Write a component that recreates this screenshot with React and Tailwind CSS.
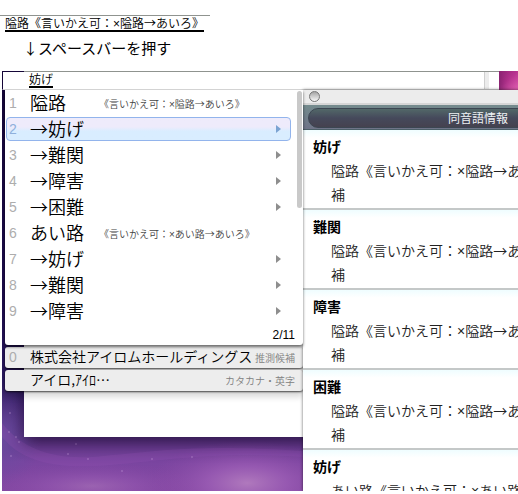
import { useState } from "react";

const NOTE = "《言いかえ可：×隘路→あいろ》";

const CANDIDATES = [
  { text: "隘路", note: NOTE },
  { text: "→妨げ", more: true },
  { text: "→難関", more: true },
  { text: "→障害", more: true },
  { text: "→困難", more: true },
  { text: "あい路", note: "《言いかえ可：×あい路→あいろ》" },
  { text: "→妨げ", more: true },
  { text: "→難関", more: true },
  { text: "→障害", more: true },
];

const HOMONYMS = [
  { word: "妨げ", from: "隘路" },
  { word: "難関", from: "隘路" },
  { word: "障害", from: "隘路" },
  { word: "困難", from: "隘路" },
  { word: "妨げ", from: "あい路" },
];

const STARS = [
  [6, 49], [9, 145], [5, 190], [7, 121], [14, 126], [17, 131], [74, 133],
  [66, 143], [86, 148], [150, 148], [190, 146], [177, 124], [120, 160], [8, 102],
];

// The multiplication sign stays half width, everything else uses the CJK face.
function Note({ children }) {
  const [before, after] = children.split("×");
  return (
    <>
      {before}
      <span className="font-['Liberation_Sans',sans-serif] leading-none">×</span>
      {after}
    </>
  );
}

function Wallpaper() {
  return (
    <svg
      className="absolute inset-0 h-full w-full"
      viewBox="0 0 516 420"
      preserveAspectRatio="none"
      aria-hidden="true"
    >
      <defs>
        <linearGradient id="sky" x1="0" y1="0" x2="0" y2="1">
          <stop offset="0" stopColor="#150638" />
          <stop offset="0.55" stopColor="#1d0c4c" />
          <stop offset="0.74" stopColor="#2c1a60" />
          <stop offset="0.86" stopColor="#55307c" />
          <stop offset="0.93" stopColor="#7a45a0" />
          <stop offset="1" stopColor="#8247a2" />
        </linearGradient>
        <radialGradient id="glow">
          <stop offset="0" stopColor="#b079bd" />
          <stop offset="0.4" stopColor="#9c5db5" stopOpacity="0.8" />
          <stop offset="1" stopColor="#8a48a5" stopOpacity="0" />
        </radialGradient>
        <radialGradient id="haze">
          <stop offset="0" stopColor="#6a4aa0" />
          <stop offset="1" stopColor="#6a4aa0" stopOpacity="0" />
        </radialGradient>
        <linearGradient id="aurora" x1="0" y1="0" x2="1" y2="1">
          <stop offset="0" stopColor="#8a1f70" />
          <stop offset="0.5" stopColor="#b83390" />
          <stop offset="1" stopColor="#e868b8" />
        </linearGradient>
      </defs>
      <rect width="516" height="420" fill="url(#sky)" />
      <rect x="490" width="26" height="22" fill="url(#aurora)" />
      <ellipse cx="0" cy="365" rx="40" ry="50" fill="url(#haze)" />
      <ellipse cx="90" cy="415" rx="110" ry="24" fill="url(#glow)" opacity="0.55" />
      <ellipse cx="245" cy="412" rx="100" ry="42" fill="url(#glow)" />
      <path
        d="M0 352 C20 378 50 388 90 386 C140 382 190 372 301 380 L301 386 C200 380 150 392 95 395 C50 397 20 390 0 366Z"
        fill="#8f4fae"
        opacity="0.3"
      />
      {STARS.map(([x, y]) => (
        <circle key={`${x}-${y}`} cx={x} cy={y + 240} r="0.7" fill="#cfa8e0" opacity="0.7" />
      ))}
    </svg>
  );
}

function DocumentWindow() {
  return (
    <>
      <div className="absolute top-0 right-[19px] bottom-[54px] left-[22px] bg-white shadow-[0_5px_14px_rgba(20,5,40,0.6)]" />
      <div className="absolute top-0 right-[19px] left-0 flex h-[19px] border-t border-b border-t-[#8f938f] border-b-[#d8d8d8] border-l border-l-[#150638] bg-white">
        <p className="ml-[26px] h-4 border-b-2 border-black text-[12px] leading-[14px] text-black">
          妨げ
        </p>
        <div className="mr-[10px] ml-auto w-[5px] border-l border-[#cfcfcf] bg-[#ececec]" />
      </div>
      <div className="absolute top-0 left-0 h-px w-[22px] bg-[#150638]" />
    </>
  );
}

function CandidateList() {
  const [selected, setSelected] = useState(1);

  return (
    <div className="relative rounded-b-[3px] bg-white pr-3 pl-px shadow-[0_2px_3px_rgba(0,0,0,0.6)]">
      <ol>
        {CANDIDATES.map((item, index) => (
          <li key={index} className="flex h-[26px] items-center">
            <button
              type="button"
              onClick={() => setSelected(index)}
              className={`flex h-6 w-full items-center rounded-[4px] border pl-[2px] text-left ${
                index === selected
                  ? "border-[#92b4ec] bg-linear-to-b from-[#eeebfb] from-40% to-[#d9edff] to-60%"
                  : "border-transparent"
              }`}
            >
              <span
                className={`w-[21px] font-['Liberation_Sans',sans-serif] text-[14px] ${
                  index === selected ? "text-[#8fb0dc]" : "text-[#adadad]"
                }`}
              >
                {index + 1}
              </span>
              <span className="pb-[2px] text-[18px] leading-5 whitespace-nowrap text-black">
                {item.text}
              </span>
              {item.note && (
                <span
                  className={`text-[10px] whitespace-nowrap text-[#444] ${
                    item.text.length === 2 ? "ml-[33px]" : "ml-[15px]"
                  }`}
                >
                  <Note>{item.note}</Note>
                </span>
              )}
              {item.more && (
                <svg className="mr-[9px] ml-auto h-2 w-[5px]" viewBox="0 0 5 8" aria-hidden="true">
                  <path d="M0 0L5 4L0 8Z" fill={index === selected ? "#7ba3d2" : "#8e8e8e"} />
                </svg>
              )}
            </button>
          </li>
        ))}
      </ol>
      <p className="-mr-1 h-[21px] text-right font-['Liberation_Sans',sans-serif] text-[12px] leading-[22px] text-black">
        2/11
      </p>
      <div className="absolute top-px right-px h-[117px] w-[5px] rounded-full bg-[#c9c9c9]" />
    </div>
  );
}

function ExtraRow({ number, text, label }) {
  return (
    <button
      type="button"
      className="mt-[2px] flex h-[21px] w-full items-center rounded-[3px] bg-[#ededed] pr-2 pl-1 text-left shadow-[0_1px_2px_rgba(0,0,0,0.7),0_6px_6px_rgba(0,0,0,0.15)]"
    >
      <span className="w-[21px] shrink-0 font-['Liberation_Sans',sans-serif] text-[14px] text-[#adadad]">
        {number}
      </span>
      <span className="pb-[2px] text-[14px] leading-[19px] whitespace-nowrap text-black">{text}</span>
      <span className="ml-auto text-[10px] whitespace-nowrap text-[#808080]">{label}</span>
    </button>
  );
}

function HomonymPanel() {
  return (
    <section className="w-[350px] shrink-0 bg-white shadow-[0_0_3px_rgba(0,0,0,0.6)]">
      <div className="flex h-[15px] items-center border-b-2 border-[#d6d6d6] bg-[#ececec] pl-[6px]">
        <button
          type="button"
          aria-label="閉じる"
          className="h-[11px] w-[11px] rounded-full border border-[#777] bg-linear-to-b from-[#a5a5a5] to-[#f8f8f8]"
        />
      </div>
      <header className="h-[25px] border-b border-[#4d6068] bg-linear-to-b from-[#748b8d] to-[#6f7488] px-[5px] pt-[3px]">
        <h2 className="h-5 rounded-full border border-[#3c4652] bg-linear-to-b from-[#526868] via-[#45495b] to-[#45424f] text-center text-[12px] leading-[18px] font-normal text-[#eef2f4]">
          同音語情報
        </h2>
      </header>
      <dl>
        {HOMONYMS.map((item, index) => (
          <div
            key={index}
            className="border-b-2 border-[#c4c8c8] bg-linear-to-b from-[#effdff] via-white via-10% to-white pt-1 pb-[2px]"
          >
            <dt className="pl-[10px] text-[14px] leading-6 font-bold text-black">{item.word}</dt>
            <dd className="pl-7 text-[14px] leading-6 text-[#222]">
              <span className="block whitespace-nowrap">
                <Note>{`${item.from}《言いかえ可：×${item.from}→あいろ》`}</Note>
              </span>
              <span className="block">補</span>
            </dd>
          </div>
        ))}
      </dl>
    </section>
  );
}

export default function App() {
  return (
    <main
      lang="ja"
      className="flex h-screen flex-col overflow-hidden bg-white pb-[3px] font-['Noto_Sans_CJK_JP',sans-serif] font-[350]"
    >
      <div className="h-[71px] shrink-0 pt-[15px]">
        <div className="w-[210px] border-t border-[#8f938f] pl-[5px]">
          <p className="w-fit border-b-2 border-black text-[12px] leading-[14px] whitespace-nowrap text-black">
            隘路<Note>{NOTE}</Note>
          </p>
        </div>
        <p className="mt-[6px] pl-[23px] text-[15px] leading-5 font-normal text-black">
          ↓スペースバーを押す
        </p>
      </div>

      <div className="relative ml-[2px] flex-1 overflow-hidden">
        <Wallpaper />
        <DocumentWindow />
        <div className="absolute inset-0 top-[19px] left-[3px] flex">
          <div className="w-[298px] shrink-0">
            <CandidateList />
            <ExtraRow number="0" text="株式会社アイロムホールディングス" label="推測候補" />
            <ExtraRow text="アイロ,ｱｲﾛ…" label="カタカナ・英字" />
          </div>
          <HomonymPanel />
        </div>
      </div>
    </main>
  );
}
